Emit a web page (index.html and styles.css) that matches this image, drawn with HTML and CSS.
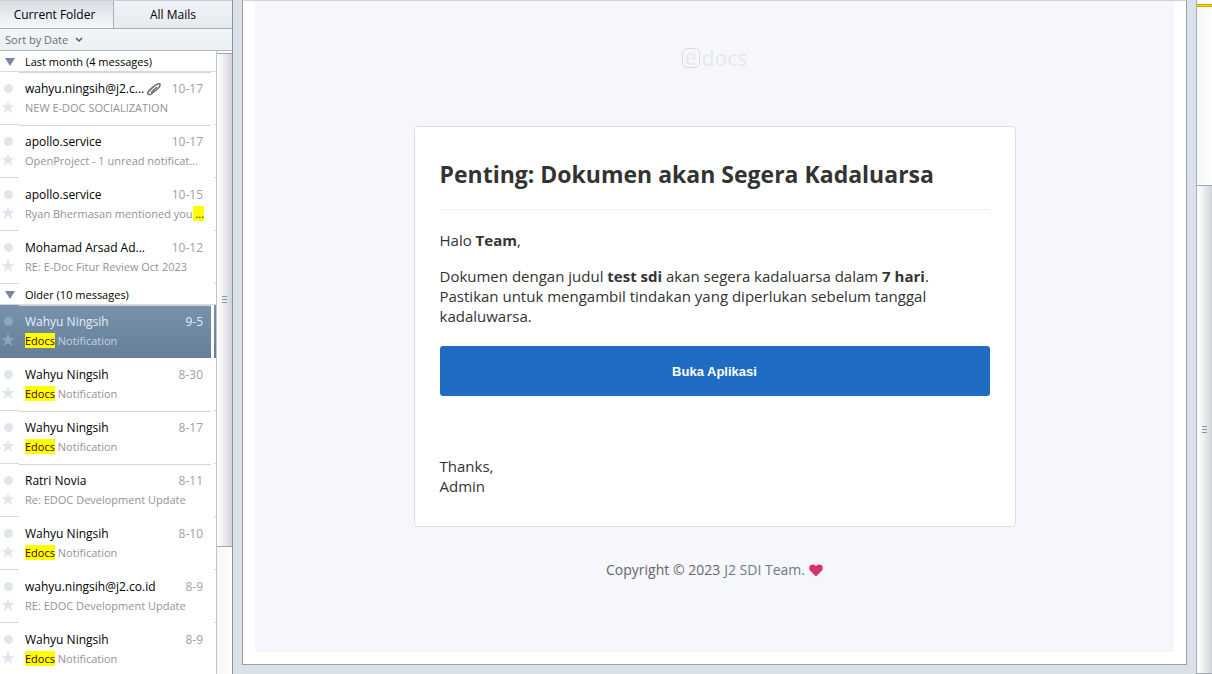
FILE: index.html
```html
<!DOCTYPE html>
<html lang="id">
<head>
<meta charset="utf-8">
<title>Mail</title>
<link rel="stylesheet" href="styles.css">
</head>
<body>
<svg class="sprite" aria-hidden="true">
  <symbol id="star" viewBox="0 0 14 14"><path d="M7 0.6L8.8 5H13.4L9.8 7.9L11.2 13L7 10L2.8 13L4.2 7.9L0.6 5H5.2Z"/></symbol>
  <symbol id="tri" viewBox="0 0 10 8"><path d="M0 0H10L5 8Z"/></symbol>
</svg>
<div class="app">
  <aside class="sidebar">
    <nav class="tabs">
      <button class="tab tab--active" type="button">Current Folder</button>
      <button class="tab" type="button">All Mails</button>
    </nav>
    <div class="sort">
      <select class="sort__select" aria-label="Sort order"><option>Sort by Date</option></select>
      <svg class="sort__arrow" viewBox="0 0 8 6" aria-hidden="true"><path d="M1 1L4 4L7 1"/></svg>
    </div>
    <div class="list-area">
      <div class="list">
        <h2 class="group"><svg class="group__icon"><use href="#tri"/></svg>Last month (4 messages)</h2>
        <ul class="messages">
          <li class="msg msg--ruled"><div class="flags"><span class="dot"></span><button class="star" type="button" aria-label="Star"><svg><use href="#star"/></svg></button></div>
            <div class="body"><div class="top"><span class="from">wahyu.ningsih@j2.c...</span><svg class="clip" viewBox="0 0 16 14" aria-hidden="true"><path d="M2 10L9 3.500Q12 1 14 2Q14.500 4 12 6.500L6 11.500Q3.500 13.500 2 12Q1 10.500 3 8.500L8 4M5 10.500L11 5"/></svg><time class="date">10-17</time></div><div class="subject">NEW E-DOC SOCIALIZATION</div></div></li>
          <li class="msg msg--ruled"><div class="flags"><span class="dot"></span><button class="star" type="button" aria-label="Star"><svg><use href="#star"/></svg></button></div>
            <div class="body"><div class="top"><span class="from">apollo.service</span><time class="date">10-17</time></div><div class="subject">OpenProject - 1 unread notificat...</div></div></li>
          <li class="msg"><div class="flags"><span class="dot"></span><button class="star" type="button" aria-label="Star"><svg><use href="#star"/></svg></button></div>
            <div class="body"><div class="top"><span class="from">apollo.service</span><time class="date">10-15</time></div><div class="subject">Ryan Bhermasan mentioned you<mark> ...</mark></div></div></li>
          <li class="msg"><div class="flags"><span class="dot"></span><button class="star" type="button" aria-label="Star"><svg><use href="#star"/></svg></button></div>
            <div class="body"><div class="top"><span class="from">Mohamad Arsad Ad...</span><time class="date">10-12</time></div><div class="subject">RE: E-Doc Fitur Review Oct 2023</div></div></li>
        </ul>
        <h2 class="group"><svg class="group__icon"><use href="#tri"/></svg>Older (10 messages)</h2>
        <ul class="messages">
          <li class="msg msg--ruled msg--selected"><div class="flags"><span class="dot"></span><button class="star" type="button" aria-label="Star"><svg><use href="#star"/></svg></button></div>
            <div class="body"><div class="top"><span class="from">Wahyu Ningsih</span><time class="date">9-5</time></div><div class="subject"><mark>Edocs</mark> Notification</div></div></li>
          <li class="msg"><div class="flags"><span class="dot"></span><button class="star" type="button" aria-label="Star"><svg><use href="#star"/></svg></button></div>
            <div class="body"><div class="top"><span class="from">Wahyu Ningsih</span><time class="date">8-30</time></div><div class="subject"><mark>Edocs</mark> Notification</div></div></li>
          <li class="msg msg--ruled"><div class="flags"><span class="dot"></span><button class="star" type="button" aria-label="Star"><svg><use href="#star"/></svg></button></div>
            <div class="body"><div class="top"><span class="from">Wahyu Ningsih</span><time class="date">8-17</time></div><div class="subject"><mark>Edocs</mark> Notification</div></div></li>
          <li class="msg msg--ruled"><div class="flags"><span class="dot"></span><button class="star" type="button" aria-label="Star"><svg><use href="#star"/></svg></button></div>
            <div class="body"><div class="top"><span class="from">Ratri Novia</span><time class="date">8-11</time></div><div class="subject">Re: EDOC Development Update</div></div></li>
          <li class="msg"><div class="flags"><span class="dot"></span><button class="star" type="button" aria-label="Star"><svg><use href="#star"/></svg></button></div>
            <div class="body"><div class="top"><span class="from">Wahyu Ningsih</span><time class="date">8-10</time></div><div class="subject"><mark>Edocs</mark> Notification</div></div></li>
          <li class="msg"><div class="flags"><span class="dot"></span><button class="star" type="button" aria-label="Star"><svg><use href="#star"/></svg></button></div>
            <div class="body"><div class="top"><span class="from">wahyu.ningsih@j2.co.id</span><time class="date">8-9</time></div><div class="subject">RE: EDOC Development Update</div></div></li>
          <li class="msg"><div class="flags"><span class="dot"></span><button class="star" type="button" aria-label="Star"><svg><use href="#star"/></svg></button></div>
            <div class="body"><div class="top"><span class="from">Wahyu Ningsih</span><time class="date">8-9</time></div><div class="subject"><mark>Edocs</mark> Notification</div></div></li>
        </ul>
      </div>
      <div class="track track--list"><div class="thumb"><span class="grip"></span></div></div>
    </div>
  </aside>
  <main class="reader">
    <article class="mail">
      <header class="logo"><span class="logo__e">e</span><span class="logo__text">docs</span></header>
      <section class="card">
        <h1 class="card__title">Penting: Dokumen akan Segera Kadaluarsa</h1>
        <p>Halo <b>Team</b>,</p>
        <p>Dokumen dengan judul <b>test sdi</b> akan segera kadaluarsa dalam <b>7 hari</b>. Pastikan untuk mengambil tindakan yang diperlukan sebelum tanggal kadaluwarsa.</p>
        <button class="cta" type="button">Buka Aplikasi</button>
        <p>Thanks,<br>Admin</p>
      </section>
      <footer class="copyright">Copyright © 2023 <span class="copyright__team">J2 SDI Team.</span>
        <svg class="heart" viewBox="0 0 14 13" role="img" aria-label="love"><path d="M7 12.500L1.200 6.800C-0.300 5.200 0 2.600 1.400 1.300C3.100 -0.200 5.700 0.200 7 2.100C8.300 0.200 10.900 -0.200 12.600 1.300C14 2.600 14.300 5.200 12.800 6.800Z"/></svg>
      </footer>
    </article>
  </main>
  <div class="track track--page"><div class="marker"></div><div class="thumb"><span class="grip"></span></div></div>
</div>
</body>
</html>
```
FILE: styles.css
```css
* { box-sizing: border-box; }
body { margin: 0; font: 12px/16px "Open Sans", "Noto Sans", sans-serif; color: #000; }
button, select { font: inherit; color: inherit; margin: 0; border: 0; padding: 0; background: none; }
.sprite { display: none; }

.app { display: flex; height: 100vh; overflow: hidden; background: #dae1e8; }

/* message list */
.sidebar { display: flex; flex-direction: column; flex: 0 0 233px; min-width: 0; border-right: 1px solid #8e979f; background: #fff; }
.tabs { display: flex; flex: none; height: 29px; border-top: 1px solid #c9cdd3; border-bottom: 1px solid #a4afba; }
.tab { flex: 1; background: linear-gradient(#f0f4f8, #e5eaef); }
.tab--active { flex: 0 0 114px; padding-right: 4px; border-right: 1px solid #a4afba; background: linear-gradient(#d8dde4, #f6f8fa); }
.sort { display: flex; flex: none; align-items: center; height: 22px; padding-left: 5px; border-bottom: 1px solid #b3bac0; background: linear-gradient(#f3f6f8, #eaf0f4); color: #666e75; }
.sort__select { appearance: none; font-size: 11px; }
.sort__arrow { width: 8px; height: 6px; margin-left: 6px; fill: none; stroke: #555d64; stroke-width: 1.5; }
.list-area { display: flex; flex: 1; min-height: 0; }
.list { flex: 1; min-width: 0; overflow: hidden; }
.group { display: flex; align-items: center; height: 21px; margin: 0; padding-top: 2px; font-size: 11px; font-weight: 500; border-bottom: 1px solid #d8d8d8; }
.group__icon { width: 10px; height: 8px; margin: 0 10px 0 5px; fill: #7588a0; }
.messages { margin: 0; padding: 0; list-style: none; }
.msg { display: flex; height: 53px; }
.msg::after { content: ""; flex: 0 0 2px; border-bottom: 1px solid #d8d8d8; }
.flags { display: flex; flex: 0 0 19px; flex-direction: column; gap: 7px; padding: 12px 0 0 4px; border-bottom: 1px solid #d8d8d8; }
.dot { width: 9px; height: 9px; border-radius: 50%; background: #dfe6ee; }
.star { display: block; width: 14px; height: 14px; margin-left: -3px; }
.star svg { display: block; width: 14px; height: 14px; fill: #dfe6ee; }
.body { flex: 1; min-width: 0; margin-right: 3px; padding: 8px 8px 0 6px; border-top: 1px solid transparent; white-space: nowrap; }
.msg--ruled .body { border-top-color: #d4d4d4; }
.top { display: flex; align-items: center; height: 16px; }
.from { font-weight: 500; }
.clip { width: 16px; height: 14px; margin-left: 2px; fill: none; stroke: #6e7276; stroke-width: 1.5; }
.date { margin-left: auto; color: #a4a0a4; }
.subject { height: 16px; margin-top: 3px; color: #97909b; font-size: 11px; }
mark { background: #ff0; color: #400; }
.msg--selected .flags, .msg--selected .body, .msg--selected::after { background: linear-gradient(#7892ad, #667f97); }
.msg--selected .flags, .msg--selected::after { border-bottom-color: #667f97; }
.msg--selected .dot { background: #8ea5bc; }
.msg--selected .star svg { fill: #8ea5bc; }
.msg--selected .from, .msg--selected .date { color: #e3edf7; }
.msg--selected .subject { color: #c6d2e4; }

/* scrollbars */
.track { display: flex; flex: 0 0 16px; flex-direction: column; border-left: 1px solid #bfc5c9; background: linear-gradient(90deg, #f4f8f6, #fdfefd); }
.track--list { padding-top: 2px; }
.thumb { display: flex; align-items: center; justify-content: center; border: solid #a0a9b1; border-width: 1px 0; background: linear-gradient(90deg, #fdfdfd, #f0f1f2 40%, #cfd3da); }
.track--list .thumb { flex: 494; }
.track--list::after { content: ""; flex: 128; }
.track--page .thumb { flex: 1; }
.grip { width: 5px; height: 7px; background: repeating-linear-gradient(#8296a8 0 1px, transparent 1px 3px); }
.track--page { border-left-color: #a4b0b8; }
.marker { height: 3px; margin: 4px 0 178px; border: solid #c8a800; border-width: 1px 0; background: #ffdc00; }

/* reading pane */
.reader { display: flex; flex: 1; min-width: 0; margin: 0 9px 9px; padding: 0 12px 12px; border: 1px solid #98a0a8; border-top-color: #d0d2d8; background: #fff; }
.mail { display: flex; flex: 1; min-width: 0; flex-direction: column; align-items: center; background: #f6f7fc; color: #333; font-size: 15px; line-height: 20px; }
.logo { display: flex; align-items: center; gap: 2px; height: 26px; margin: 44px 0 55px; color: #e6e8eb; font-size: 21px; font-weight: 400; }
.logo__e { width: 18px; height: 20px; border: 1px solid #d9dbdf; border-radius: 5px; line-height: 16px; text-align: center; }
.card { display: flex; flex-direction: column; width: 602px; max-width: 100%; padding: 31px 25px 30px; border: 1px solid #dcdfe6; border-radius: 4px; background: #fff; }
.card__title { margin: 0 0 20px; padding-bottom: 19px; border-bottom: 1px solid #f0f0f2; font-size: 23px; line-height: 32px; }
.card p { margin: 0 0 16px; }
.card .cta { height: 50px; margin: 4px 0 60px; border-radius: 3px; background: #206bc4; color: #fff; font: bold 13px "Liberation Sans", Arial, sans-serif; }
.card p:last-child { margin: 0; }
.copyright { display: flex; align-items: center; gap: 4px; margin-top: 33px; color: #666; font-size: 14px; }
.copyright__team { color: #6e7a89; }
.heart { width: 14px; height: 13px; fill: #d6336c; }
```
